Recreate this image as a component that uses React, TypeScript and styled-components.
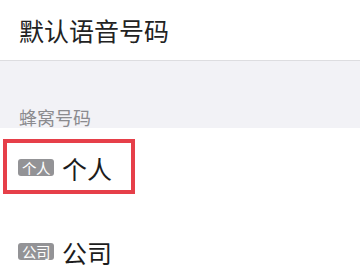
import styled, { createGlobalStyle } from 'styled-components';

const GlobalStyle = createGlobalStyle`
  html, body {
    margin: 0;
    padding: 0;
    background: #ffffff;
  }
  body {
    font-family: "Noto Sans CJK SC", "Noto Sans", sans-serif;
  }
`;

const Page = styled.div`
  width: 360px;
  height: 270px;
  overflow: hidden;
  background: #ffffff;
`;

const Header = styled.div`
  height: 60px;
  display: flex;
  align-items: center;
  padding-left: 19px;
  font-size: 25px;
  color: #222222;
  border-bottom: 1px solid #dddde0;
  box-sizing: content-box;
`;

const SectionHead = styled.div`
  height: 67px;
  background: #f2f2f6;
  display: flex;
  align-items: flex-end;
  padding-left: 19px;
  box-sizing: border-box;
`;

const SectionLabel = styled.span`
  font-size: 18px;
  line-height: 18px;
  color: #8b8b8f;
  margin-bottom: 2px;
`;

const Row = styled.div`
  position: relative;
  height: 84px;
  display: flex;
  align-items: center;
  padding: 0 0 5px 18px;
  box-sizing: border-box;
  gap: 8px;
`;

const Badge = styled.span`
  width: 36px;
  height: 17px;
  border-radius: 3px;
  background: #939396;
  color: #ffffff;
  font-size: 14.5px;
  line-height: 17px;
  text-align: center;
  letter-spacing: -0.5px;
`;

const Name = styled.span`
  font-size: 25px;
  line-height: 30px;
  color: #1c1c1c;
`;

const Highlight = styled.div`
  position: absolute;
  left: 3px;
  top: 11px;
  width: 132px;
  height: 55px;
  border: 4px solid #e63f49;
  box-sizing: border-box;
  pointer-events: none;
`;

export default function App() {
  return (
    <Page>
      <GlobalStyle />
      <Header>默认语音号码</Header>
      <SectionHead>
        <SectionLabel>蜂窝号码</SectionLabel>
      </SectionHead>
      <Row>
        <Badge>个人</Badge>
        <Name>个人</Name>
        <Highlight />
      </Row>
      <Row>
        <Badge>公司</Badge>
        <Name>公司</Name>
      </Row>
    </Page>
  );
}
